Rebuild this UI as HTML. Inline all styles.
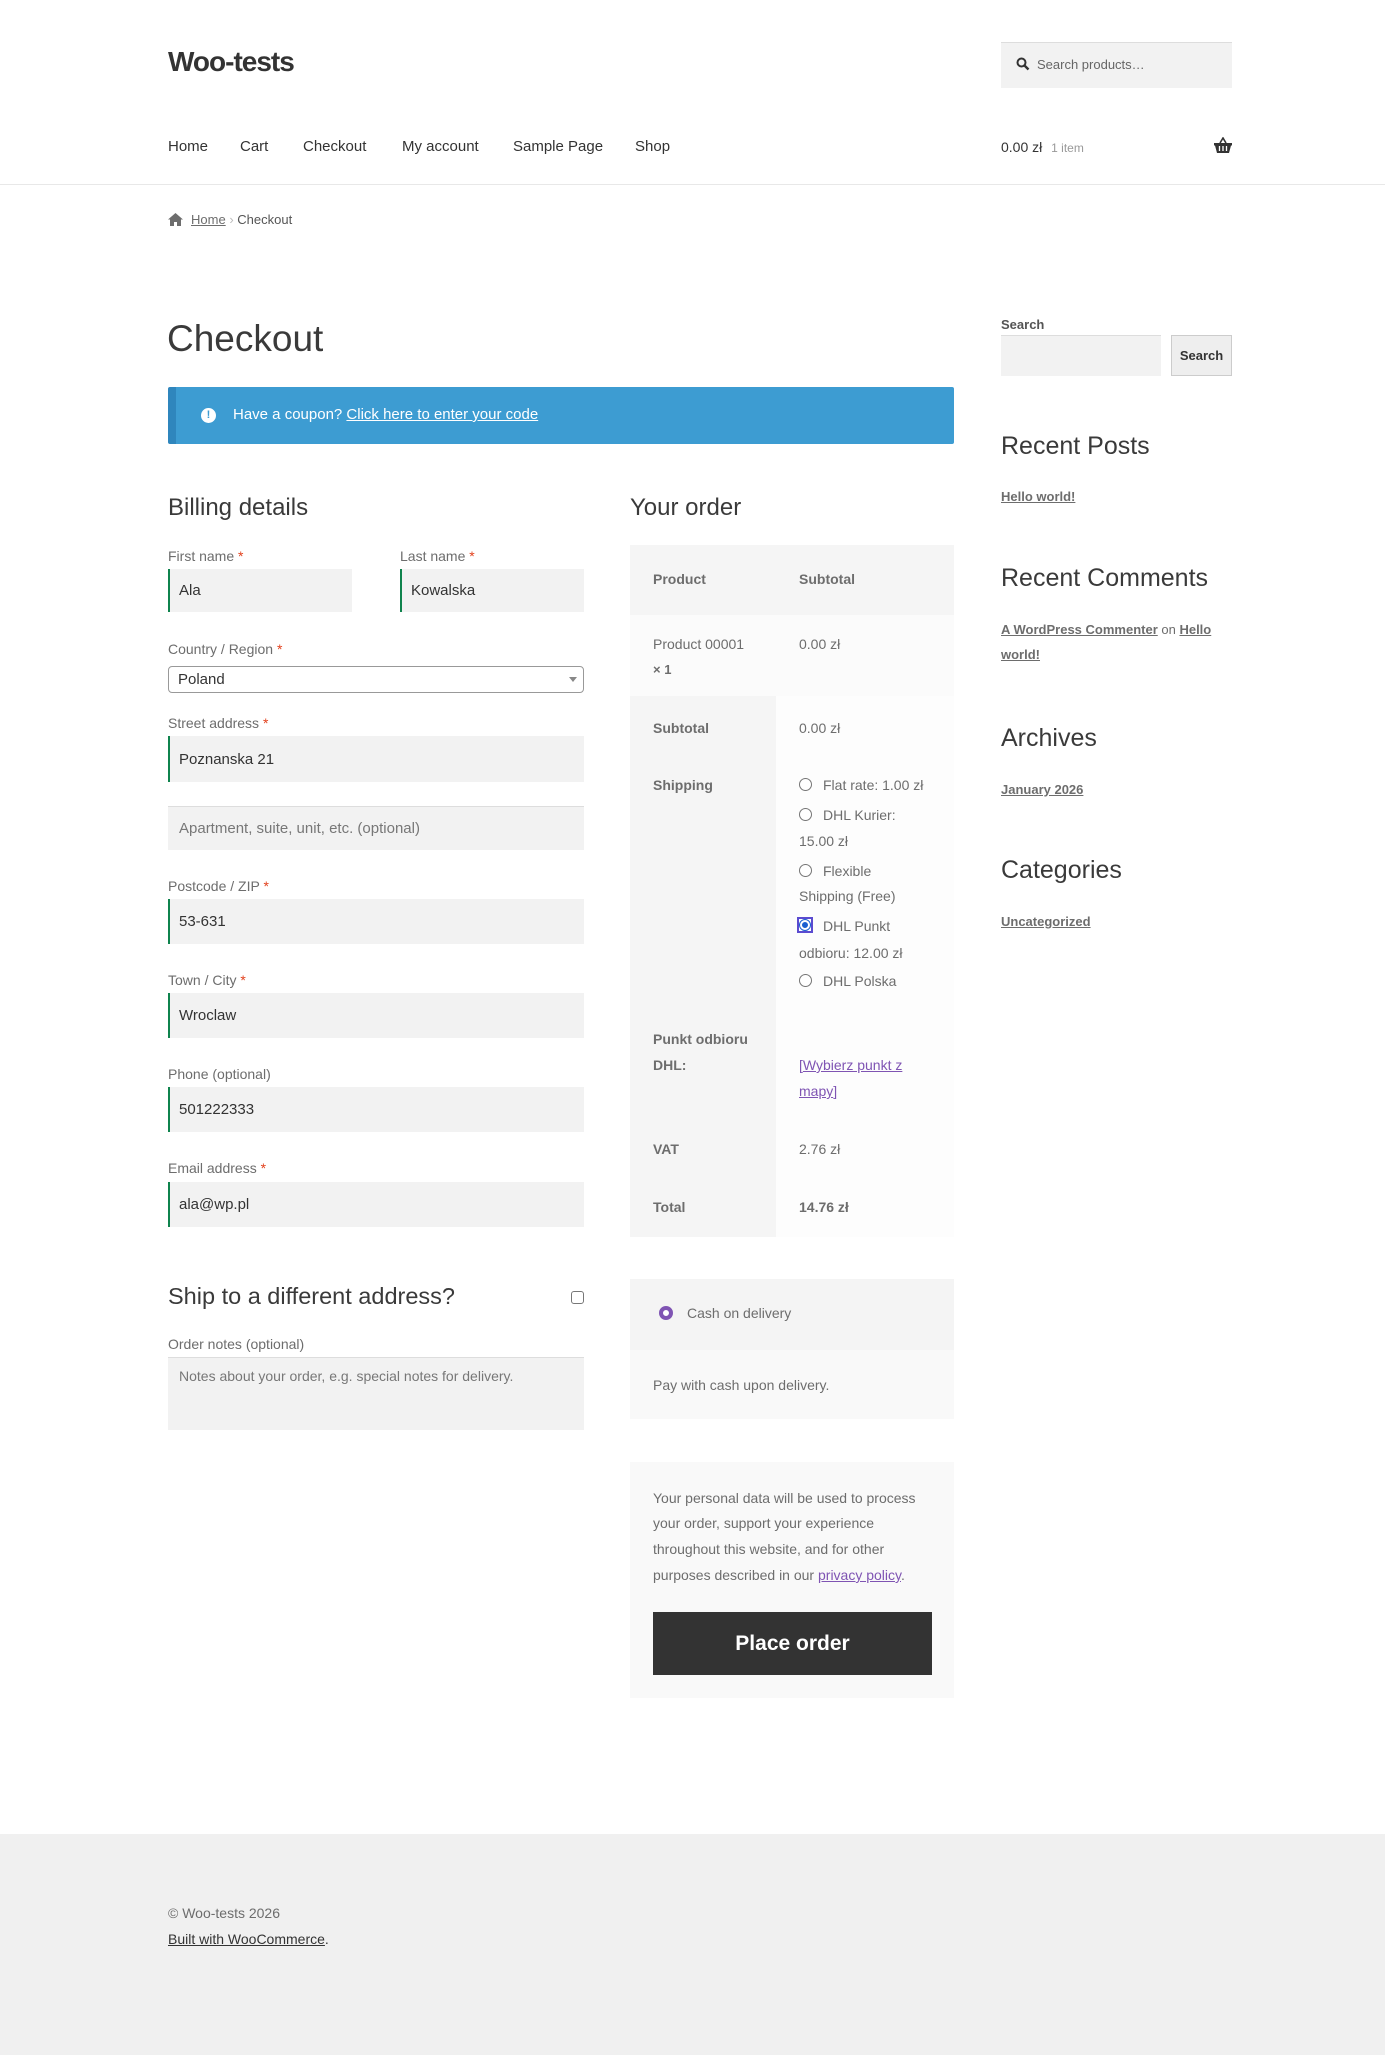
<!DOCTYPE html>
<html><head><meta charset="utf-8"><style>
*{margin:0;padding:0;box-sizing:border-box}
body{width:1385px;height:2055px;position:relative;background:#fff;font-family:"Liberation Sans",sans-serif;color:#6d6d6d;font-size:15px;overflow:hidden}
.t{position:absolute;white-space:nowrap;line-height:20px}
.b{position:absolute}
.h{color:#3a3a3a;font-weight:300}
.inp{position:absolute;background:#f2f2f2;border-left:2px solid #0f834d;color:#333;font-size:15px;padding-left:9px;display:flex;align-items:center}
.req{color:#e2401c}
a{color:inherit}
.pur{color:#7f54b3;text-decoration:underline}
.sl{font-weight:bold;font-size:13px;text-decoration:underline;color:#6d6d6d}
.radio{position:absolute;width:13px;height:13px;border:1px solid #767676;border-radius:50%;background:#fff}
</style></head><body>
<!-- header -->
<div class="t" style="left:168px;top:44px;font-size:28px;line-height:36px;font-weight:bold;color:#333;letter-spacing:-1px">Woo-tests</div>
<div class="b" style="left:1001px;top:42px;width:231px;height:46px;background:#f2f2f2;border-top:1px solid #ddd"></div>
<svg class="b" style="left:1016px;top:57px" width="14" height="14" viewBox="0 0 14 14"><circle cx="5.5" cy="5.5" r="4" fill="none" stroke="#333" stroke-width="2"/><path d="M8.5 8.5L12.5 12.5" stroke="#333" stroke-width="2.4"/></svg>
<div class="t" style="left:1037px;top:55px;font-size:13px;color:#666">Search products…</div>
<div class="t" style="left:168px;top:137px;color:#333;font-size:15px">Home</div>
<div class="t" style="left:240px;top:137px;color:#333">Cart</div>
<div class="t" style="left:303px;top:137px;color:#333">Checkout</div>
<div class="t" style="left:402px;top:137px;color:#333">My account</div>
<div class="t" style="left:513px;top:137px;color:#333">Sample Page</div>
<div class="t" style="left:635px;top:137px;color:#333">Shop</div>
<div class="t" style="left:1001px;top:137px;color:#333;font-size:14px">0.00 zł <span style="color:#999;font-size:12px;margin-left:5px">1 item</span></div>
<svg class="b" style="left:1214px;top:137px" width="18" height="16" viewBox="0 0 18 16"><path d="M6 6L9 1L12 6" fill="none" stroke="#333" stroke-width="1.6"/><path d="M0 6H18V8.5H17L15 16H3L1 8.5H0Z" fill="#333"/><path d="M5.5 9V14M9 9V14M12.5 9V14" stroke="#fff" stroke-width="1.3"/></svg>
<div class="b" style="left:0;top:184px;width:1385px;height:1px;background:#e8e8e8"></div>
<!-- breadcrumb -->
<svg class="b" style="left:168px;top:213px" width="15" height="13" viewBox="0 0 15 13"><path d="M7.5 0L15 6.5H13V13H9V9H6V13H2V6.5H0Z" fill="#6d6d6d"/></svg>
<div class="t" style="left:191px;top:210px;font-size:13px;color:#6d6d6d"><u>Home</u> <span style="color:#bbb">›</span> <span style="color:#555">Checkout</span></div>
<!-- title -->
<div class="t h" style="left:167px;top:316px;font-size:37px;line-height:46px">Checkout</div>
<div class="b" style="left:168px;top:387px;width:786px;height:57px;background:#3d9cd2;border-left:8px solid #2f86bd;border-radius:2px"></div>
<div class="b" style="left:201px;top:408px;width:15px;height:15px;border-radius:50%;background:#fff;color:#3d9cd2;font-size:11px;font-weight:bold;text-align:center;line-height:15px">!</div>
<div class="t" style="left:233px;top:405px;color:#fff;font-size:15px">Have a coupon? <u>Click here to enter your code</u></div>
<!-- billing -->
<div class="t h" style="left:168px;top:492px;font-size:24px;line-height:32px">Billing details</div>
<div class="t" style="left:168px;top:546px;font-size:14px">First name <span class="req">*</span></div>
<div class="t" style="left:400px;top:546px;font-size:14px">Last name <span class="req">*</span></div>
<div class="inp" style="left:168px;top:569px;width:184px;height:43px">Ala</div>
<div class="inp" style="left:400px;top:569px;width:184px;height:43px">Kowalska</div>
<div class="t" style="left:168px;top:639px;font-size:14px">Country / Region <span class="req">*</span></div>
<div class="b" style="left:168px;top:666px;width:416px;height:27px;border:1px solid #999;border-radius:4px;color:#333;font-size:15px;padding-left:9px;line-height:25px">Poland</div>
<div class="b" style="left:569px;top:677px;border-left:4px solid transparent;border-right:4px solid transparent;border-top:5px solid #888"></div>
<div class="t" style="left:168px;top:713px;font-size:14px">Street address <span class="req">*</span></div>
<div class="inp" style="left:168px;top:736px;width:416px;height:46px">Poznanska 21</div>
<div class="inp" style="left:168px;top:806px;width:416px;height:44px;border-left:0;border-top:1px solid #ddd;padding-left:11px;color:#777">Apartment, suite, unit, etc. (optional)</div>
<div class="t" style="left:168px;top:876px;font-size:14px">Postcode / ZIP <span class="req">*</span></div>
<div class="inp" style="left:168px;top:899px;width:416px;height:45px">53-631</div>
<div class="t" style="left:168px;top:970px;font-size:14px">Town / City <span class="req">*</span></div>
<div class="inp" style="left:168px;top:993px;width:416px;height:45px">Wroclaw</div>
<div class="t" style="left:168px;top:1064px;font-size:14px">Phone (optional)</div>
<div class="inp" style="left:168px;top:1087px;width:416px;height:45px">501222333</div>
<div class="t" style="left:168px;top:1158px;font-size:14px">Email address <span class="req">*</span></div>
<div class="inp" style="left:168px;top:1182px;width:416px;height:45px">ala@wp.pl</div>
<div class="t h" style="left:168px;top:1280px;font-size:23.5px;line-height:32px">Ship to a different address?</div>
<div class="b" style="left:571px;top:1291px;width:13px;height:13px;border:1px solid #777;border-radius:3px"></div>
<div class="t" style="left:168px;top:1334px;font-size:14px">Order notes (optional)</div>
<div class="b" style="left:168px;top:1357px;width:416px;height:73px;background:#f2f2f2;border-top:1px solid #ddd;padding:10px 11px;font-size:14px;color:#777">Notes about your order, e.g. special notes for delivery.</div>
<!-- order -->
<div class="t h" style="left:630px;top:492px;font-size:24px;line-height:32px">Your order</div>
<div class="b" style="left:630px;top:545px;width:324px;height:70px;background:#f5f5f5"></div>
<div class="b" style="left:630px;top:615px;width:324px;height:81px;background:#fbfbfb"></div>
<div class="b" style="left:630px;top:696px;width:146px;height:541px;background:#f5f5f5"></div>
<div class="b" style="left:776px;top:696px;width:178px;height:541px;background:#fdfdfd"></div>
<div class="t" style="left:653px;top:569px;font-weight:bold;font-size:14px">Product</div>
<div class="t" style="left:799px;top:569px;font-weight:bold;font-size:14px">Subtotal</div>
<div class="t" style="left:653px;top:634px;font-size:14px">Product 00001</div>
<div class="t" style="left:653px;top:660px;font-size:13px;font-weight:bold">× 1</div>
<div class="t" style="left:799px;top:634px;font-size:14px">0.00 zł</div>
<div class="t" style="left:653px;top:718px;font-weight:bold;font-size:14px">Subtotal</div>
<div class="t" style="left:799px;top:718px;font-size:14px">0.00 zł</div>
<div class="t" style="left:653px;top:775px;font-weight:bold;font-size:14px">Shipping</div>
<div class="radio" style="left:799px;top:778px"></div>
<div class="t" style="left:823px;top:775px;font-size:14px">Flat rate: 1.00 zł</div>
<div class="radio" style="left:799px;top:808px"></div>
<div class="t" style="left:823px;top:805px;font-size:14px">DHL Kurier:</div>
<div class="t" style="left:799px;top:831px;font-size:14px">15.00 zł</div>
<div class="radio" style="left:799px;top:864px"></div>
<div class="t" style="left:823px;top:861px;font-size:14px">Flexible</div>
<div class="t" style="left:799px;top:886px;font-size:14px">Shipping (Free)</div>
<div class="b" style="left:797px;top:917px;width:16px;height:16px;border:2px solid #5b4bd0;background:#fff"><div style="margin:1px;width:10px;height:10px;border-radius:50%;background:#1a5fd0;border:2px solid #fff;outline:1px solid #1a5fd0"></div></div>
<div class="t" style="left:823px;top:916px;font-size:14px">DHL Punkt</div>
<div class="t" style="left:799px;top:943px;font-size:14px">odbioru: 12.00 zł</div>
<div class="radio" style="left:799px;top:974px"></div>
<div class="t" style="left:823px;top:971px;font-size:14px">DHL Polska</div>
<div class="t" style="left:653px;top:1029px;font-weight:bold;font-size:14px">Punkt odbioru</div>
<div class="t" style="left:653px;top:1055px;font-weight:bold;font-size:14px">DHL:</div>
<div class="t" style="left:799px;top:1055px;font-size:14px;color:#7f54b3">[<u>Wybierz punkt z</u></div>
<div class="t" style="left:799px;top:1081px;font-size:14px;color:#7f54b3"><u>mapy</u>]</div>
<div class="t" style="left:653px;top:1139px;font-weight:bold;font-size:14px">VAT</div>
<div class="t" style="left:799px;top:1139px;font-size:14px">2.76 zł</div>
<div class="t" style="left:653px;top:1197px;font-weight:bold;font-size:14px">Total</div>
<div class="t" style="left:799px;top:1197px;font-weight:bold;font-size:14px">14.76 zł</div>
<!-- payment -->
<div class="b" style="left:630px;top:1279px;width:324px;height:71px;background:#f4f4f4"></div>
<div class="b" style="left:630px;top:1350px;width:324px;height:69px;background:#f9f9f9"></div>
<div class="b" style="left:659px;top:1306px;width:14px;height:14px;border-radius:50%;border:4px solid #7f54b3;background:#fff"></div>
<div class="t" style="left:687px;top:1303px;font-size:14px">Cash on delivery</div>
<div class="t" style="left:653px;top:1375px;font-size:14px">Pay with cash upon delivery.</div>
<div class="b" style="left:630px;top:1462px;width:324px;height:236px;background:#f9f9f9"></div>
<div class="t" style="left:653px;top:1488px;font-size:14px">Your personal data will be used to process</div>
<div class="t" style="left:653px;top:1513px;font-size:14px">your order, support your experience</div>
<div class="t" style="left:653px;top:1539px;font-size:14px">throughout this website, and for other</div>
<div class="t" style="left:653px;top:1565px;font-size:14px">purposes described in our <span class="pur">privacy policy</span>.</div>
<div class="b" style="left:653px;top:1612px;width:279px;height:63px;background:#333;color:#fff;font-size:21px;font-weight:bold;text-align:center;line-height:63px">Place order</div>
<!-- sidebar -->
<div class="t" style="left:1001px;top:315px;font-size:13px;font-weight:bold;color:#555">Search</div>
<div class="b" style="left:1001px;top:335px;width:160px;height:41px;background:#f2f2f2;border-top:1px solid #ddd"></div>
<div class="b" style="left:1171px;top:335px;width:61px;height:41px;background:#eee;border:1px solid #ccc;font-size:13px;font-weight:bold;color:#333;text-align:center;line-height:39px">Search</div>
<div class="t h" style="left:1001px;top:430px;font-size:25px;line-height:32px">Recent Posts</div>
<div class="t sl" style="left:1001px;top:487px">Hello world!</div>
<div class="t h" style="left:1001px;top:562px;font-size:25px;line-height:32px">Recent Comments</div>
<div class="t" style="left:1001px;top:620px;font-size:13px"><span class="sl">A WordPress Commenter</span> on <span class="sl">Hello</span></div>
<div class="t sl" style="left:1001px;top:645px">world!</div>
<div class="t h" style="left:1001px;top:722px;font-size:25px;line-height:32px">Archives</div>
<div class="t sl" style="left:1001px;top:780px">January 2026</div>
<div class="t h" style="left:1001px;top:854px;font-size:25px;line-height:32px">Categories</div>
<div class="t sl" style="left:1001px;top:912px">Uncategorized</div>
<!-- footer -->
<div class="b" style="left:0;top:1834px;width:1385px;height:221px;background:#f0f0f0"></div>
<div class="t" style="left:168px;top:1903px;font-size:14px">© Woo-tests 2026</div>
<div class="t" style="left:168px;top:1929px;font-size:14px;color:#333"><u>Built with WooCommerce</u>.</div>
</body></html>
